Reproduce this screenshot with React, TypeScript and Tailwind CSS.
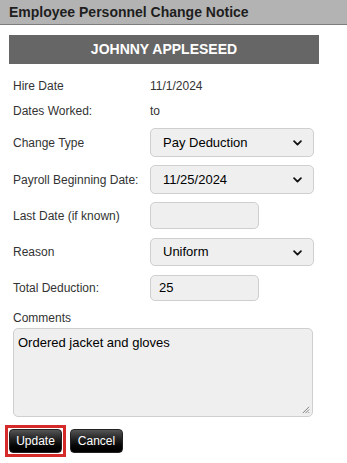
import React from 'react'

function Chevron() {
  return (
    <svg
      viewBox="0 0 16 16"
      className="h-[11px] w-[11px]"
      fill="none"
      stroke="#111"
      strokeWidth="2.6"
      strokeLinecap="round"
      strokeLinejoin="round"
    >
      <path d="M3 6l5 5 5-5" />
    </svg>
  )
}

function SelectBox({ value }: { value: string }) {
  return (
    <div className="flex w-[164px] items-center justify-between rounded-[5px] border border-[#cfcfcf] bg-[#efefef] pr-[10px] pl-[12px] text-[13px] text-black">
      <span>{value}</span>
      <Chevron />
    </div>
  )
}

function InputBox({ value }: { value?: string }) {
  return (
    <div className="flex w-[109px] items-center rounded-[5px] border border-[#cfcfcf] bg-[#efefef] px-[8px] text-[13px] text-black">
      {value}
    </div>
  )
}

function Row({ label, children, className }: { label: string; children: React.ReactNode; className: string }) {
  return (
    <div className={`flex items-stretch ${className}`}>
      <div className="flex w-[137px] items-center text-[12px] text-[#333]">{label}</div>
      {children}
    </div>
  )
}

export default function App() {
  return (
    <main className="min-h-[463px] w-[347px] bg-white font-['Liberation_Sans',Arial,sans-serif]">
      <header className="flex h-[25px] items-center border-b border-[#7d7d7d] bg-[#b3b3b3] pl-[9px] text-[14px] font-bold text-[#1e1e1e]">
        Employee Personnel Change Notice
      </header>

      <section className="px-[9px] pt-[10px]">
        <div className="flex h-[29px] w-[310px] items-center justify-center bg-[#666666] text-[14px] font-bold text-white">
          JOHNNY APPLESEED
        </div>

        <div className="px-[4px]">
          <Row label="Hire Date" className="mt-[10px] h-[24px]">
            <span className="flex items-center text-[12px] text-[#333]">11/1/2024</span>
          </Row>
          <Row label="Dates Worked:" className="h-[25px]">
            <span className="flex items-center text-[12px] text-[#333]">to</span>
          </Row>
          <Row label="Change Type" className="mt-[5px] h-[29px]">
            <SelectBox value="Pay Deduction" />
          </Row>
          <Row label="Payroll Beginning Date:" className="mt-[8px] h-[29px]">
            <SelectBox value="11/25/2024" />
          </Row>
          <Row label="Last Date (if known)" className="mt-[8px] h-[27px]">
            <InputBox />
          </Row>
          <Row label="Reason" className="mt-[9px] h-[28px]">
            <SelectBox value="Uniform" />
          </Row>
          <Row label="Total Deduction:" className="mt-[9px] h-[26px]">
            <InputBox value="25" />
          </Row>

          <div className="mt-[10px] text-[12px] leading-[14px] text-[#333]">Comments</div>
          <div className="relative mt-[3px] h-[89px] w-[300px] rounded-[5px] border border-[#cfcfcf] bg-[#efefef] px-[4px] pt-[4px] text-[13px] text-black">
            Ordered jacket and gloves
            <svg viewBox="0 0 10 10" className="absolute right-[2px] bottom-[2px] h-[9px] w-[9px]" stroke="#777" strokeWidth="1">
              <path d="M9 2L2 9M9 5L5 9M9 8L8 9" />
            </svg>
          </div>
        </div>
      </section>

      <div className="mt-[8px] flex items-center gap-[4px] pl-[5px]">
        <div className="border-[3px] border-[#d42a2a] p-px">
          <button className="flex h-[24px] w-[53px] items-center justify-center rounded-[4px] border border-[#222] bg-gradient-to-b from-[#555] via-[#1a1a1a] to-[#000] text-[12px] text-white">
            Update
          </button>
        </div>
        <button className="flex h-[24px] w-[53px] items-center justify-center rounded-[4px] border border-[#222] bg-gradient-to-b from-[#555] via-[#1a1a1a] to-[#000] text-[12px] text-white">
          Cancel
        </button>
      </div>
    </main>
  )
}
